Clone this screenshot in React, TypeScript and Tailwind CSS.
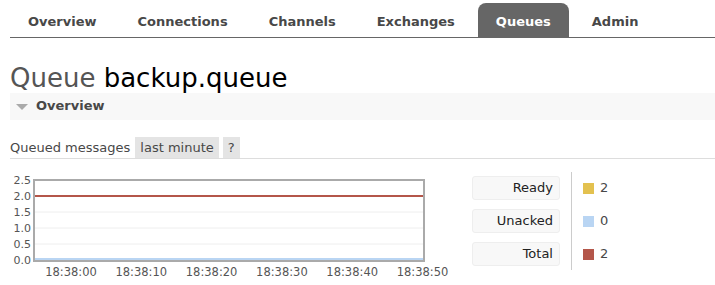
import React from 'react';

const tabs = ['Overview', 'Connections', 'Channels', 'Exchanges', 'Queues', 'Admin'];

const legend = [
  { label: 'Ready', color: 'bg-[#e3c14f]', value: '2' },
  { label: 'Unacked', color: 'bg-[#b9d5f3]', value: '0' },
  { label: 'Total', color: 'bg-[#b4564a]', value: '2' }
];

const yTicks = ['2.5', '2.0', '1.5', '1.0', '0.5', '0.0'];
const xTicks = ['18:38:00', '18:38:10', '18:38:20', '18:38:30', '18:38:40', '18:38:50'];

const Chart: React.FC = () => {
  return (
    <svg width={440} height={115} className="shrink-0">
      {/* horizontal grid */}
      {[42, 58, 74].map(y => (
        <line key={y} x1={25} x2={413} y1={y} y2={y} stroke="#eeeeee" strokeWidth={1} />
      ))}
      <line x1={25} x2={413} y1={26} y2={26} stroke="#b4564a" strokeWidth={2} />
      <line x1={25} x2={413} y1={89} y2={89} stroke="#b9d5f3" strokeWidth={2} />
      <rect x={24} y={10} width={390} height={81} fill="none" stroke="#aaaaaa" strokeWidth={2} />
      {yTicks.map((t, i) => (
        <text key={t} x={21} y={13.5 + i * 16} textAnchor="end" fontSize={11} fill="#555" fontFamily="DejaVu Sans, sans-serif">
          {t}
        </text>
      ))}
      {xTicks.map((t, i) => (
        <text key={t} x={61 + i * 70.3} y={106} textAnchor="middle" fontSize={11.5} fill="#555" fontFamily="DejaVu Sans, sans-serif">
          {t}
        </text>
      ))}
    </svg>
  );
};

const App: React.FC = () => {
  return (
    <div className="w-[715px] h-[285px] overflow-hidden bg-white font-['DejaVu_Sans',sans-serif] text-[13px] text-[#484848]">
      {/* top menu */}
      <div className="ml-[10px] flex pt-[3px] border-b border-[#666]">
        {tabs.map(t => (
          <div
            key={t}
            className={
              t === 'Queues'
                ? 'mr-[5px] px-[18px] pt-[9px] pb-[5px] leading-[20px] font-bold rounded-t-[8px] bg-[#666] text-white'
                : 'mr-[5px] px-[18px] pt-[9px] pb-[5px] leading-[20px] font-bold text-[#484848]'
            }
          >
            {t}
          </div>
        ))}
      </div>

      <div className="px-[10px] pr-0">
        <h1 className="mt-[25px] h-[30px] leading-[30px] text-[26px] font-normal text-[#555]">
          Queue <span className="text-black">backup.queue</span>
        </h1>

        {/* section header */}
        <div className="h-[27px] bg-[#f8f8f8] flex items-start pt-[5px] leading-[15px]">
          <span className="ml-[6px] mt-[6px] w-0 h-0 border-l-[6.5px] border-r-[6.5px] border-t-[6px] border-l-transparent border-r-transparent border-t-[#aaa]" />
          <span className="ml-[8px] font-bold text-[#484848]">Overview</span>
        </div>

        {/* queued messages */}
        <div className="mt-[17px] flex items-start h-[22px] border-b border-[#ddd] leading-[21px]">
          <span>Queued messages</span>
          <span className="ml-[5px] px-[5px] bg-[#e4e4e4]">last minute</span>
          <span className="ml-[4px] px-[5px] bg-[#e4e4e4]">?</span>
        </div>

        {/* chart + legend */}
        <div className="mt-[11px] flex">
          <Chart />
          <div className="ml-[22px] mt-[6px] flex flex-col gap-[9px]">
            {legend.map(l => (
              <div key={l.label} className="w-[88px] h-[24px] leading-[22px] text-right pr-[6px] bg-[#f8f8f8] border border-[#eee] rounded-[3px] text-[#222]">
                {l.label}
              </div>
            ))}
          </div>
          <div className="ml-[11px] mt-[2px] h-[98px] border-l border-[#ccc] pl-[11px] pt-[4px] flex flex-col gap-[9px]">
            {legend.map(l => (
              <div key={l.label} className="h-[24px] flex items-center">
                <span className={`w-[11px] h-[11px] ${l.color}`} />
                <span className="ml-[6px]">{l.value}</span>
              </div>
            ))}
          </div>
        </div>
      </div>
    </div>
  );
};

export default App;
